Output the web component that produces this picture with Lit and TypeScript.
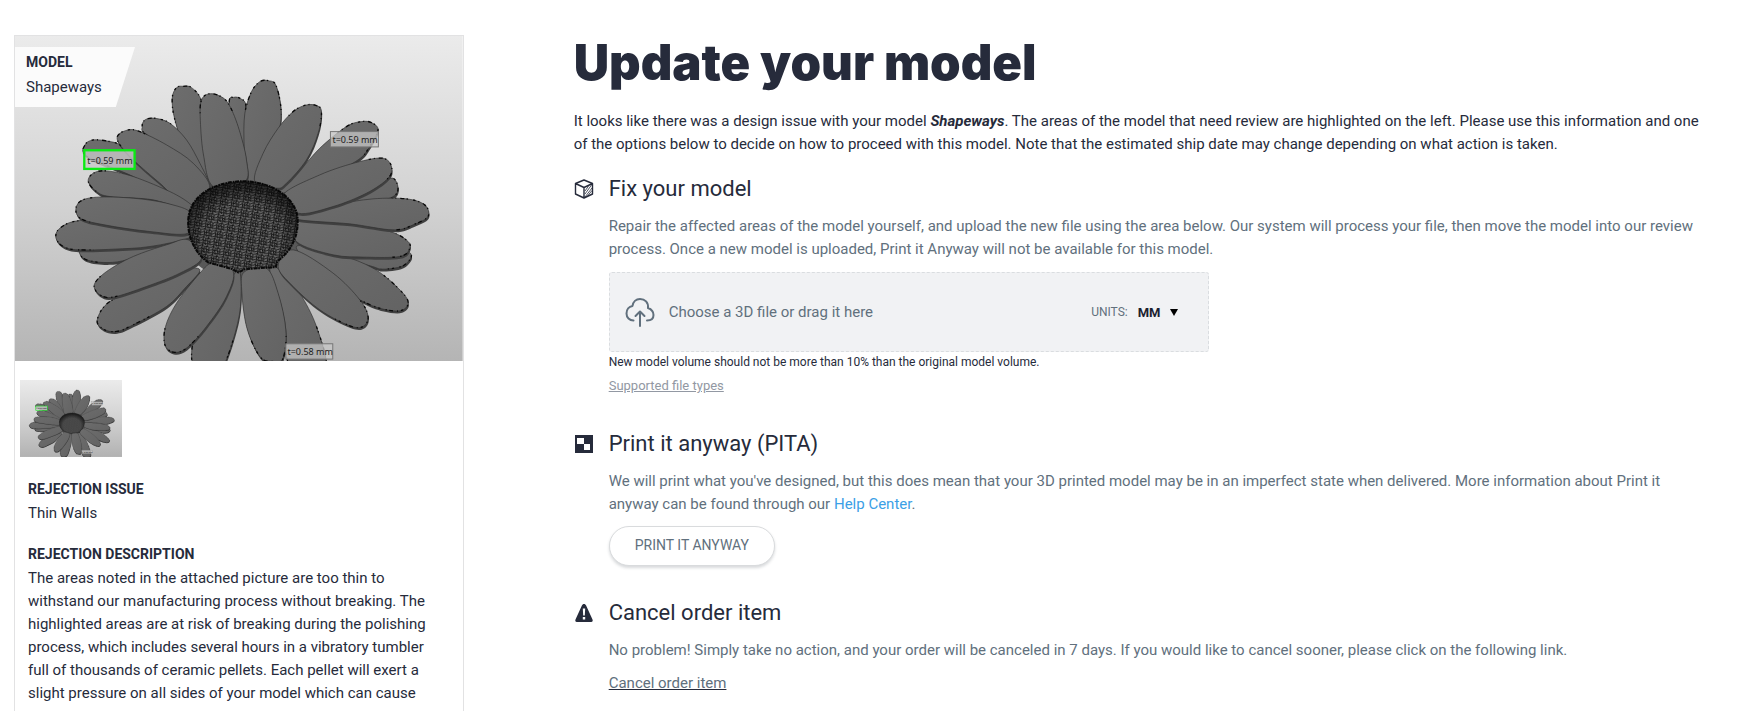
import { LitElement, html, svg, css } from "lit";
import { customElement, property, state } from "lit/decorators.js";

type Point = [number, number];

/* Petal outlines of the daisy, ordered back to front. */
const PETALS: string[] = [
  "740,480 705,380 688,250 702,232 722,236 738,255 742,330",
  "960,385 1040,320 1085,305 1115,308 1135,330 1110,380 1075,420 980,470 850,520 830,505 900,450",
  "1060,540 1140,490 1180,475 1195,505 1180,530 1120,545 900,580",
  "1030,700 1220,695 1215,735 1150,748 1100,735 900,680",
  "560,670 400,715 330,728 260,720 238,695 260,675",
  "720,755 722,860 700,960 670,1040 640,1060 600,1060 575,1010 600,900 690,780",
  "810,745 850,760 900,820 950,920 980,1040 930,1070 870,1040 840,900",
  "650,500 610,480 560,400 525,300 517,235 530,203 551,199 575,203 604,240 625,330",
  "630,500 560,420 440,345 427,320 435,300 465,295 510,310 560,360 600,430",
  "575,570 480,520 400,470 262,410 255,375 280,360 330,365 370,380 480,450 590,540",
  "570,565 480,490 400,420 357,370 355,345 385,330 420,335 500,375 580,430 630,505",
  "575,575 460,540 330,530 290,515 265,485 280,460 320,453 400,470 520,520 580,560",
  "565,655 450,680 340,688 235,690 190,680 168,655 180,625 240,602 400,600 560,640",
  "565,640 450,635 330,618 250,600 228,575 240,545 290,532 400,535 500,550 575,580",
  "600,750 560,800 500,860 400,915 350,935 310,928 292,900 330,845 440,800 540,750",
  "605,715 540,760 440,800 340,832 300,825 283,795 320,755 400,710 500,675 565,660",
  "700,755 680,830 620,920 560,985 520,997 495,975 497,920 530,850 600,760 640,730",
  "725,800 735,755 800,745 835,820 858,930 850,1015 820,1025 780,1010 740,920",
  "890,680 1020,705 1120,745 1190,800 1225,845 1205,872 1150,868 1080,840 980,780",
  "835,740 880,690 1000,760 1080,840 1105,890 1090,920 1050,918 960,870 880,800",
  "895,600 1050,615 1170,635 1225,665 1228,690 1200,710 1100,712 1000,705 890,665",
  "895,580 1000,555 1120,537 1220,537 1275,555 1285,590 1240,615 1180,630 1050,612 900,600",
  "850,525 960,465 1080,425 1150,415 1175,440 1165,475 1100,520 1000,560 895,580",
  "740,480 733,380 735,280 755,215 780,185 805,182 828,195 843,260 838,330 800,400 765,485",
  "765,485 790,400 835,325 880,275 920,255 950,257 965,275 955,340 920,420 860,490 830,505",
  "640,500 610,400 601,290 605,240 625,222 655,226 685,250 715,320 740,420 735,485",
];

const CORE =
  "M565 600C568 530 640 485 730 484C820 485 885 535 893 590C898 640 880 690 832 725L828 742L735 748L715 758L698 748L625 728C585 700 562 650 565 600Z";

/* Closed Catmull-Rom curve through the listed points. */
function smooth(list: string): string {
  const p = list.split(" ").map((s) => s.split(",").map(Number) as Point);
  const n = p.length;
  let d = `M${p[0]}`;
  for (let i = 0; i < n; i++) {
    const [a, b, c, e] = [p[(i + n - 1) % n], p[i], p[(i + 1) % n], p[(i + 2) % n]];
    const c1 = [b[0] + (c[0] - a[0]) / 6, b[1] + (c[1] - a[1]) / 6];
    const c2 = [c[0] - (e[0] - b[0]) / 6, c[1] - (e[1] - b[1]) / 6];
    d += `C${c1.map(Math.round)} ${c2.map(Math.round)} ${c}`;
  }
  return d + "Z";
}

const OUTLINES = PETALS.map(smooth);

@customElement("model-render")
export class ModelRender extends LitElement {
  /* Visible part of the drawing, in drawing units. */
  @property() view = "45 48 1344 1014";

  static styles = css`
    :host { display: block; }
    .scene { display: block; width: 100%; height: auto; }
    .petal { fill: url(#petal); stroke: #303030; stroke-width: 2; }
    .side { fill: #404040; }
    .rough { fill: none; stroke: #0a0a0a; stroke-width: 4; stroke-dasharray: 7 9 3 12 12 7 4 16; }
    .tag { fill: #c8c8c8; fill-opacity: 0.75; stroke: #777; stroke-width: 3; }
    .mark { fill: #c8c8c8; fill-opacity: 0.8; stroke: #0bea14; stroke-width: 7; }
    .measure { font: 27px "Noto Sans", sans-serif; fill: #1c1c1c; }
  `;

  render() {
    return html`
      <svg class="scene" viewBox=${this.view} role="img" aria-label="Daisy model with thin petals marked">
        <defs>
          <linearGradient id="sky" x1="0" y1="0" x2="0" y2="1">
            <stop offset="0" stop-color="#ebebeb"></stop>
            <stop offset="0.5" stop-color="#d2d2d2"></stop>
            <stop offset="1" stop-color="#b2b2b2"></stop>
          </linearGradient>
          <linearGradient id="petal" x1="0" y1="0" x2="1" y2="1">
            <stop offset="0" stop-color="#6d6d6d"></stop>
            <stop offset="1" stop-color="#636363"></stop>
          </linearGradient>
          <radialGradient id="dome" cx="0.5" cy="0.6" r="0.55">
            <stop offset="0.65" stop-color="#000" stop-opacity="0"></stop>
            <stop offset="1" stop-color="#000" stop-opacity="0.55"></stop>
          </radialGradient>
          <pattern id="mesh" width="37" height="31" patternUnits="userSpaceOnUse" patternTransform="rotate(9) scale(0.9 0.8)">
            <path d="M0 5L8 1L15 7L24 3L31 8L37 5M0 17L6 12L14 17L21 13L30 18L37 17M0 27L9 23L17 28L25 24L32 28L37 27M8 1L6 12M15 7L14 17M24 3L21 13M31 8L30 18M6 12L9 23M14 17L17 28M21 13L25 24M30 18L32 28M9 23L8 31M17 28L15 31M25 24L24 31M8 0V1M24 0V3"
              fill="none" stroke="#080808" stroke-width="3"></path>
          </pattern>
          <clipPath id="tips">
            <path clip-rule="evenodd" d="M0 0H1400V1100H0ZM270 617a460 345 0 1 0 920 0a460 345 0 1 0-920 0Z"></path>
          </clipPath>
        </defs>
        <rect x="45" y="48" width="1344" height="1014" fill="url(#sky)"></rect>
        <ellipse cx="730" cy="617" rx="195" ry="165" fill="#585858"></ellipse>
        ${OUTLINES.map(
          (d) => svg`
            <path class="side" d=${d} transform="translate(2 7)"></path>
            <path class="petal" d=${d}></path>
            <path class="rough" d=${d} clip-path="url(#tips)"></path>`
        )}
        <path d=${CORE} fill="#6c6c6c" stroke="#0a0a0a" stroke-width="6" stroke-dasharray="12 3 5 2"></path>
        <path d=${CORE} fill="url(#mesh)"></path>
        <path d=${CORE} fill="url(#dome)"></path>
        <rect class="tag" x="992" y="335" width="144" height="46"></rect>
        <text class="measure" x="998" y="369">t=0.59 mm</text>
        <rect class="mark" x="253" y="391" width="151" height="56"></rect>
        <text class="measure" x="262" y="431">t=0.59 mm</text>
        <rect class="tag" x="858" y="972" width="141" height="46"></rect>
        <text class="measure" x="863" y="1006">t=0.58 mm</text>
      </svg>
    `;
  }
}

@customElement("app-root")
export class AppRoot extends LitElement {
  @state() private model = "Shapeways";

  static styles = css`
    :host {
      display: block;
      height: 100vh;
      overflow: hidden;
      background: #fff;
      color: #262b3b;
      font: 15px/23px Roboto, sans-serif;
    }
    * { box-sizing: border-box; }
    h1, h2, h3, p { margin: 0; }
    .page {
      display: grid;
      grid-template-columns: minmax(0, 7fr) minmax(0, 18fr);
      gap: 110px;
      padding: 35px 14px 0;
    }
    .card { border: 1px solid #e2e2e3; padding-bottom: 24px; }
    .preview { position: relative; }
    .badge {
      position: absolute;
      top: 11px;
      left: 0;
      width: 120px;
      height: 60px;
      padding: 3px 11px;
      line-height: 25px;
      background: #fbfbfb;
      clip-path: polygon(0 0, 100% 0, 84% 100%, 0 100%);
    }
    .label { font-size: 14px; line-height: 25px; font-weight: 700; }
    .thumb { display: block; width: 102px; margin: 19px 5px 0; padding: 0; border: 0; background: none; cursor: pointer; }
    .facts { display: grid; gap: 16px; padding: 19px 22px 0 13px; }
    .facts .label { line-height: 26px; }
    .content { padding-right: 28px; }
    .title { font: 900 49px/56px Inter, sans-serif; }
    .intro { margin-top: 19px; }
    .option {
      display: grid;
      grid-template-columns: 20px minmax(0, 1fr);
      column-gap: 15px;
      margin-top: 32px;
    }
    .option.first { margin-top: 18px; }
    .icon { display: block; width: 20px; height: 20px; margin-top: 5px; }
    .name { font-size: 22px; line-height: 30px; font-weight: 400; }
    .body { margin-top: 11px; color: #61707d; }
    .drop {
      display: flex;
      align-items: center;
      justify-content: space-between;
      max-width: 600px;
      height: 80px;
      margin-top: 11px;
      padding: 0 30px 0 15px;
      border: 1px dashed #dadde0;
      border-radius: 3px;
      background: #f1f2f4;
      color: #61707d;
    }
    .choose { display: flex; align-items: center; gap: 14px; cursor: pointer; }
    .file { position: absolute; width: 1px; height: 1px; opacity: 0; }
    .cloud { width: 30px; height: 30px; }
    .units { display: flex; align-items: center; gap: 10px; font-size: 12px; }
    .picker { display: flex; align-items: center; }
    .select {
      width: 32px;
      padding: 0;
      border: 0;
      background: none;
      appearance: none;
      color: #1c2230;
      font: 700 13px/23px Roboto, sans-serif;
    }
    .caret { width: 8px; height: 7px; pointer-events: none; }
    .note { font-size: 12px; line-height: 20px; }
    .types { display: inline-block; margin-top: 4px; font-size: 13px; line-height: 20px; color: #9298a3; }
    .help { color: #3ba0e6; text-decoration: none; }
    .print {
      display: block;
      height: 40px;
      margin-top: 10px;
      padding: 0 25px 2px;
      border: 1px solid #d9dbdd;
      border-radius: 20px;
      background: #fff;
      box-shadow: 0 2px 3px rgba(40, 50, 60, 0.18);
      color: #61707d;
      font: 14px/20px Roboto, sans-serif;
      cursor: pointer;
    }
    .cancel { display: inline-block; margin-top: 10px; color: #61707d; text-decoration-color: #262b3b; }
  `;

  render() {
    return html`
      <main class="page">
        <aside class="card">
          <div class="preview">
            <model-render view="45 48 1344 975"></model-render>
            <div class="badge">
              <h3 class="label">MODEL</h3>
              <p>${this.model}</p>
            </div>
          </div>
          <button class="thumb" aria-label="Show picture 1"><model-render></model-render></button>
          <div class="facts">
            <section>
              <h3 class="label">REJECTION ISSUE</h3>
              <p>Thin Walls</p>
            </section>
            <section>
              <h3 class="label">REJECTION DESCRIPTION</h3>
              <p>The areas noted in the attached picture are too thin to withstand our manufacturing process without breaking. The highlighted areas are at risk of breaking during the polishing process, which includes several hours in a vibratory tumbler full of thousands of ceramic pellets. Each pellet will exert a slight pressure on all sides of your model which can cause</p>
            </section>
          </div>
        </aside>
        <div class="content">
          <h1 class="title">Update your model</h1>
          <p class="intro">It looks like there was a design issue with your model <strong><em>${this.model}</em></strong>. The areas of the model that need review are highlighted on the left. Please use this information and one of the options below to decide on how to proceed with this model. Note that the estimated ship date may change depending on what action is taken.</p>

          <section class="option first">
            <svg class="icon" viewBox="0 0 20 20" fill="none" stroke="#262b3b" stroke-width="1.4" stroke-linejoin="round" aria-hidden="true">
              <path d="M10 1L18.5 4.5V15L10 19L1.5 15V4.5ZM1.5 4.5L10 8.5L18.5 4.5M10 8.5V19"></path>
              <path d="M11 12L14.500 7M11 15L17.500 6M11 18L18 9M13.500 17L18 11.500" stroke-width="0.8"></path>
            </svg>
            <div>
              <h2 class="name">Fix your model</h2>
              <p class="body">Repair the affected areas of the model yourself, and upload the new file using the area below. Our system will process your file, then move the model into our review process. Once a new model is uploaded, Print it Anyway will not be available for this model.</p>
              <div class="drop">
                <label class="choose">
                  <input class="file" type="file" />
                  <svg class="cloud" viewBox="0 0 30 30" fill="none" stroke="#61707d" stroke-width="2" stroke-linecap="round" stroke-linejoin="round" aria-hidden="true">
                    <path d="M8.500 23.500C4.500 23.500 1.500 20.500 1.500 16.500C1.500 12.500 4 9.500 7.500 9C8 5 11 2 15 2C20 2 23.500 5.500 23 11C27 12.500 28.500 15 28.500 18C28.500 21.500 26 23.500 22 23.500"></path>
                    <path d="M15 29V15M10.500 19L15 14.500L19.500 19"></path>
                  </svg>
                  Choose a 3D file or drag it here
                </label>
                <div class="units">
                  <label for="units">UNITS:</label>
                  <span class="picker">
                    <select class="select" id="units">
                      <option>MM</option>
                      <option>IN</option>
                      <option>M</option>
                    </select>
                    <svg class="caret" viewBox="0 0 8 7" aria-hidden="true"><path d="M0 0H8L4 7Z"></path></svg>
                  </span>
                </div>
              </div>
              <p class="note">New model volume should not be more than 10% than the original model volume.</p>
              <a class="types" href="#file-types">Supported file types</a>
            </div>
          </section>

          <section class="option">
            <svg class="icon" viewBox="0 0 20 20" aria-hidden="true">
              <path fill="#262b3b" fill-rule="evenodd" d="M1 1H19V19H1ZM3 4V10H10V4ZM10 10V16H16V10Z"></path>
            </svg>
            <div>
              <h2 class="name">Print it anyway (PITA)</h2>
              <p class="body">We will print what you've designed, but this does mean that your 3D printed model may be in an imperfect state when delivered. More information about Print it anyway can be found through our <a class="help" href="#help">Help Center</a>.</p>
              <button class="print">PRINT IT ANYWAY</button>
            </div>
          </section>

          <section class="option">
            <svg class="icon" viewBox="0 0 20 20" aria-hidden="true">
              <path fill="#262b3b" d="M10 1C11 1 11.700 1.600 12.100 2.600L18.500 16.500C19.100 18 18.500 19 17.200 19H2.800C1.500 19 0.900 18 1.500 16.500L7.900 2.600C8.300 1.600 9 1 10 1Z"></path>
              <path fill="#fff" d="M8.800 5.500H11.200L10.800 12.500H9.200ZM8.800 14H11.200V16.500H8.800Z"></path>
            </svg>
            <div>
              <h2 class="name">Cancel order item</h2>
              <p class="body">No problem! Simply take no action, and your order will be canceled in 7 days. If you would like to cancel sooner, please click on the following link.</p>
              <a class="cancel" href="#cancel">Cancel order item</a>
            </div>
          </section>
        </div>
      </main>
    `;
  }
}
